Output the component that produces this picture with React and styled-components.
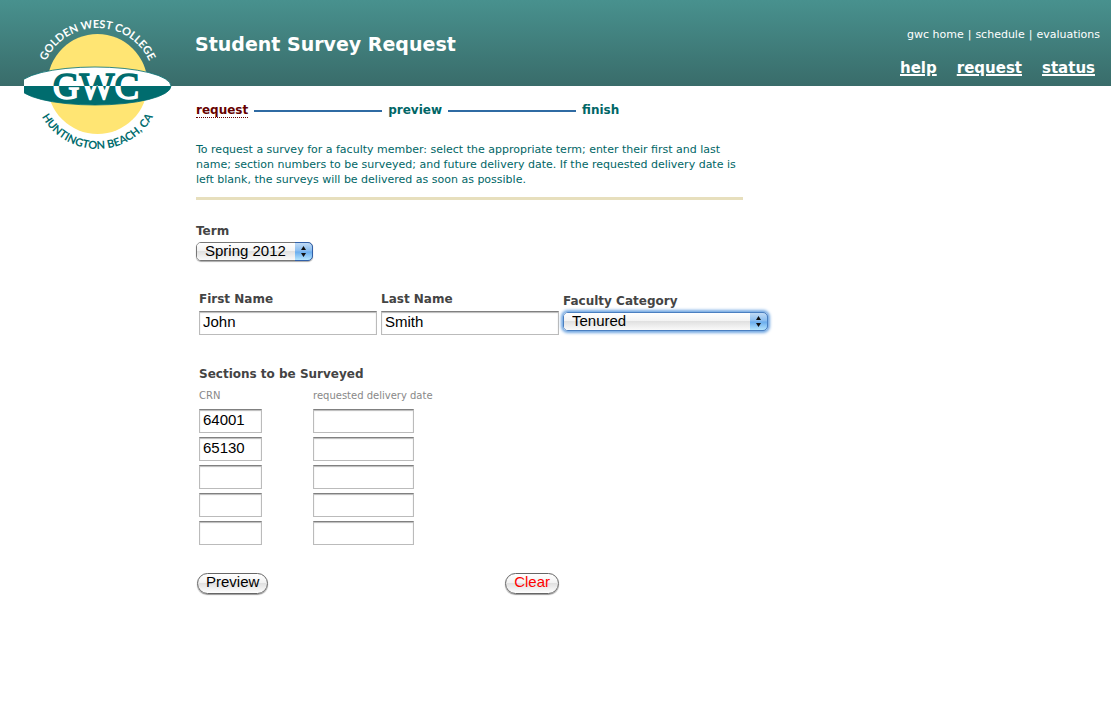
import React, { useState } from "react";
import styled, { createGlobalStyle } from "styled-components";

const GlobalStyle = createGlobalStyle`
  * {
    box-sizing: border-box;
  }

  body {
    margin: 0;
    background: #fff;
    font-family: "DejaVu Sans", Verdana, sans-serif;
    font-size: 11px;
    line-height: 15px;
    color: #444;
  }
`;

const Header = styled.header`
  position: relative;
  display: flex;
  justify-content: space-between;
  height: 86px;
  padding: 0 11px 0 195px;
  background: linear-gradient(#48918e, #396c6a);
  color: #fff;

  h1 {
    margin: 32px 0 0;
    font-size: 19px;
    line-height: 24px;
  }
`;

const LogoLink = styled.a`
  position: absolute;
  top: 14px;
  left: 20px;

  svg {
    display: block;
  }
`;

const Navs = styled.div`
  display: flex;
  flex-direction: column;
  align-items: flex-end;
  gap: 16px;
  padding-top: 27px;

  a {
    color: inherit;
  }
`;

const SiteNav = styled.nav`
  display: flex;
  gap: 4px;

  a {
    text-decoration: none;
  }
`;

const MainNav = styled.nav`
  display: flex;
  gap: 20px;
  padding-right: 5px;
  font-size: 15px;
  line-height: 20px;
  font-weight: bold;

  a {
    text-decoration-thickness: 2px;
  }
`;

const Main = styled.main`
  padding: 17px 24px 24px 196px;
`;

const Steps = styled.ol`
  display: flex;
  align-items: center;
  gap: 6px;
  margin: 0;
  padding: 0;
  list-style: none;
`;

const Step = styled.li`
  display: flex;
  align-items: center;
  gap: 6px;
  font-size: 12px;
  line-height: 14px;
  font-weight: bold;
  color: #006666;

  span {
    border-bottom: 1px ${(props) => (props.$current ? "dotted" : "solid")}
      ${(props) => (props.$current ? "#660000" : "transparent")};
    color: ${(props) => (props.$current ? "#660000" : "inherit")};
  }

  &:not(:last-child)::after {
    content: "";
    width: 128px;
    height: 2px;
    background: #2f6ba3;
  }
`;

const Intro = styled.p`
  max-width: 547px;
  margin: 24px 0 0;
  padding-bottom: 10px;
  border-bottom: 3px solid #e7dfbd;
  color: #006666;
`;

const Label = styled.label`
  display: block;
  font-size: 12px;
  line-height: 15px;
  font-weight: bold;
`;

const NameRow = styled.div`
  display: flex;
  flex-wrap: wrap;
  gap: 4px;
  margin: 31px 0 0 3px;
`;

const Field = styled.div`
  display: flex;
  flex-direction: column;
  align-items: flex-start;
  gap: ${(props) => (props.$tight ? 3 : 4)}px;
  padding-top: ${(props) => props.$top || 0}px;
`;

const TermField = styled(Field)`
  margin-top: 24px;
`;

const TextInput = styled.input`
  display: block;
  width: ${(props) => props.$width}px;
  height: 24px;
  padding: 0 3px 3px;
  border: 1px solid #bbb;
  border-top-color: #808080;
  background: #fff;
  box-shadow: inset 0 1px 1px #bbb;
  font-family: "Liberation Sans", Arial, sans-serif;
  font-size: 15px;
  color: #000;
  outline: none;
`;

const SelectBox = styled.div`
  position: relative;
  width: ${(props) => props.$width}px;
  height: 19px;
  border: 1px solid ${(props) => (props.$focused ? "#4a7fc0" : "#777")};
  border-radius: 5px;
  box-shadow: ${(props) =>
    props.$focused ? "0 0 3px 2px #73a8e2" : "0 1px 1px #aaa"};

  select {
    display: block;
    appearance: none;
    width: 100%;
    height: 17px;
    padding: 0 20px 1px 8px;
    border: 0;
    border-radius: 4px;
    background: linear-gradient(#fff, #f3f3f3 45%, #e1e1e1 50%, #fafafa);
    font-family: "Liberation Sans", Arial, sans-serif;
    font-size: 15px;
    line-height: 16px;
    color: #000;
    outline: none;
  }

  svg {
    position: absolute;
    top: -1px;
    right: -1px;
    pointer-events: none;
  }
`;

const Sections = styled.section`
  margin: 32px 0 0 3px;

  h2 {
    margin: 0;
    font-size: 12px;
    line-height: 15px;
  }
`;

const SectionTable = styled.table`
  margin-top: 6px;
  border-collapse: collapse;

  th {
    padding: 0 0 6px;
    text-align: left;
    font-size: 10px;
    font-weight: normal;
    line-height: 15px;
    color: #888;
  }

  td {
    padding: 0 0 4px;
  }

  th:first-child {
    width: 114px;
  }
`;

const Actions = styled.div`
  display: flex;
  justify-content: space-between;
  max-width: 362px;
  margin: 24px 0 0 1px;
`;

const Button = styled.button`
  height: 21px;
  padding: 0 8px 3px;
  border: 1px solid #666;
  border-radius: 11px;
  background: linear-gradient(#fff, #f2f2f2 45%, #e0e0e0 50%, #fff);
  box-shadow: 0 1px 1px #999;
  font-family: "Liberation Sans", Arial, sans-serif;
  font-size: 15px;
  line-height: 16px;
  color: ${(props) => props.$color || "#000"};
`;

function Logo() {
  return (
    <svg width="156" height="142" viewBox="20 14 156 142" role="img">
      <defs>
        <clipPath id="board">
          <rect x="24" y="60" width="150" height="50" />
        </clipPath>
        <clipPath id="board-bottom">
          <rect x="24" y="86" width="150" height="24" />
        </clipPath>
        <linearGradient
          id="letters"
          gradientUnits="userSpaceOnUse"
          x1="0"
          y1="66"
          x2="0"
          y2="106"
        >
          <stop offset="0.5" stopColor="#006c6e" />
          <stop offset="0.5" stopColor="#fff" />
        </linearGradient>
        <path id="arc-top" d="M40.5 85a57 57 0 0 1 114 0" />
        <path id="arc-bottom" d="M33.5 85a64 64 0 0 0 128 0" />
      </defs>
      <circle cx="97.5" cy="84" r="50" fill="#ffe573" />
      <g clipPath="url(#board)">
        <ellipse cx="95" cy="86" rx="76" ry="19" fill="#fff" />
        <ellipse
          cx="95"
          cy="86"
          rx="76"
          ry="19"
          fill="#006c6e"
          clipPath="url(#board-bottom)"
        />
        <ellipse
          cx="95"
          cy="86"
          rx="76"
          ry="19"
          fill="none"
          stroke="#006c6e"
          strokeWidth="0.8"
        />
      </g>
      <text
        x="96"
        y="99"
        textAnchor="middle"
        fontFamily="Liberation Serif, serif"
        fontSize="37"
        fill="url(#letters)"
        stroke="url(#letters)"
        strokeWidth="1.5"
      >
        GWC
      </text>
      <g fontFamily="Lato, sans-serif" fontSize="11" fontWeight="700">
        <text fill="#fff" textAnchor="middle">
          <textPath href="#arc-top" startOffset="50%">
            GOLDEN WEST COLLEGE
          </textPath>
        </text>
        <text fill="#006c6e" textAnchor="middle">
          <textPath href="#arc-bottom" startOffset="50%">
            HUNTINGTON BEACH, CA
          </textPath>
        </text>
      </g>
    </svg>
  );
}

function Select({ id, width, focused, options }) {
  return (
    <SelectBox $width={width} $focused={focused}>
      <select id={id} defaultValue={options[0]}>
        {options.map((option) => (
          <option key={option}>{option}</option>
        ))}
      </select>
      <svg width="18" height="19" viewBox="0 0 18 19">
        <defs>
          <linearGradient id={`${id}-blue`} x1="0" y1="0" x2="0" y2="1">
            <stop offset="0" stopColor="#c4ddf6" />
            <stop offset="0.48" stopColor="#86bbef" />
            <stop offset="0.52" stopColor="#69aced" />
            <stop offset="1" stopColor="#b9e8ff" />
          </linearGradient>
        </defs>
        <path
          d="M0 0.5h13a4.5 4.5 0 0 1 4.5 4.5v9a4.5 4.5 0 0 1-4.5 4.5H0"
          fill={`url(#${id}-blue)`}
          stroke={focused ? "#4a7fc0" : "#3260a8"}
        />
        <path d="M6 8L8.5 4l2.5 4zM6 11h5L8.5 15z" fill="#111" />
      </svg>
    </SelectBox>
  );
}

function App() {
  const [rows, setRows] = useState([
    { crn: "64001", date: "" },
    { crn: "65130", date: "" },
    { crn: "", date: "" },
    { crn: "", date: "" },
    { crn: "", date: "" },
  ]);

  function handleChangeRow(index, key, value) {
    setRows(rows.map((row, i) => (i === index ? { ...row, [key]: value } : row)));
  }

  function handleSubmit(e) {
    e.preventDefault();
    // TODO: go to preview
  }

  return (
    <>
      <GlobalStyle />
      <Header>
        <LogoLink href="#home" aria-label="Golden West College">
          <Logo />
        </LogoLink>
        <h1>Student Survey Request</h1>
        <Navs>
          <SiteNav>
            <a href="#home">gwc home</a>
            <span>|</span>
            <a href="#schedule">schedule</a>
            <span>|</span>
            <a href="#evaluations">evaluations</a>
          </SiteNav>
          <MainNav>
            <a href="#help">help</a>
            <a href="#request">request</a>
            <a href="#status">status</a>
          </MainNav>
        </Navs>
      </Header>
      <Main>
        <Steps>
          <Step $current>
            <span>request</span>
          </Step>
          <Step>
            <span>preview</span>
          </Step>
          <Step>
            <span>finish</span>
          </Step>
        </Steps>
        <Intro>
          To request a survey for a faculty member: select the appropriate term;
          enter their first and last name; section numbers to be surveyed; and
          future delivery date. If the requested delivery date is left blank,
          the surveys will be delivered as soon as possible.
        </Intro>
        <form onSubmit={handleSubmit}>
          <TermField $tight>
            <Label htmlFor="term">Term</Label>
            <Select id="term" width={117} options={["Spring 2012"]} />
          </TermField>
          <NameRow>
            <Field>
              <Label htmlFor="first">First Name</Label>
              <TextInput id="first" $width={178} defaultValue="John" />
            </Field>
            <Field>
              <Label htmlFor="last">Last Name</Label>
              <TextInput id="last" $width={178} defaultValue="Smith" />
            </Field>
            <Field $top={2} $tight>
              <Label htmlFor="category">Faculty Category</Label>
              <Select id="category" width={205} focused options={["Tenured"]} />
            </Field>
          </NameRow>
          <Sections>
            <h2>Sections to be Surveyed</h2>
            <SectionTable>
              <thead>
                <tr>
                  <th id="crn">CRN</th>
                  <th id="date">requested delivery date</th>
                </tr>
              </thead>
              <tbody>
                {rows.map((row, index) => (
                  <tr key={index}>
                    <td>
                      <TextInput
                        aria-labelledby="crn"
                        $width={63}
                        value={row.crn}
                        onChange={(e) =>
                          handleChangeRow(index, "crn", e.target.value)
                        }
                      />
                    </td>
                    <td>
                      <TextInput
                        aria-labelledby="date"
                        $width={101}
                        value={row.date}
                        onChange={(e) =>
                          handleChangeRow(index, "date", e.target.value)
                        }
                      />
                    </td>
                  </tr>
                ))}
              </tbody>
            </SectionTable>
          </Sections>
          <Actions>
            <Button type="submit">Preview</Button>
            <Button type="reset" $color="#ff0000">
              Clear
            </Button>
          </Actions>
        </form>
      </Main>
    </>
  );
}

export default App;
